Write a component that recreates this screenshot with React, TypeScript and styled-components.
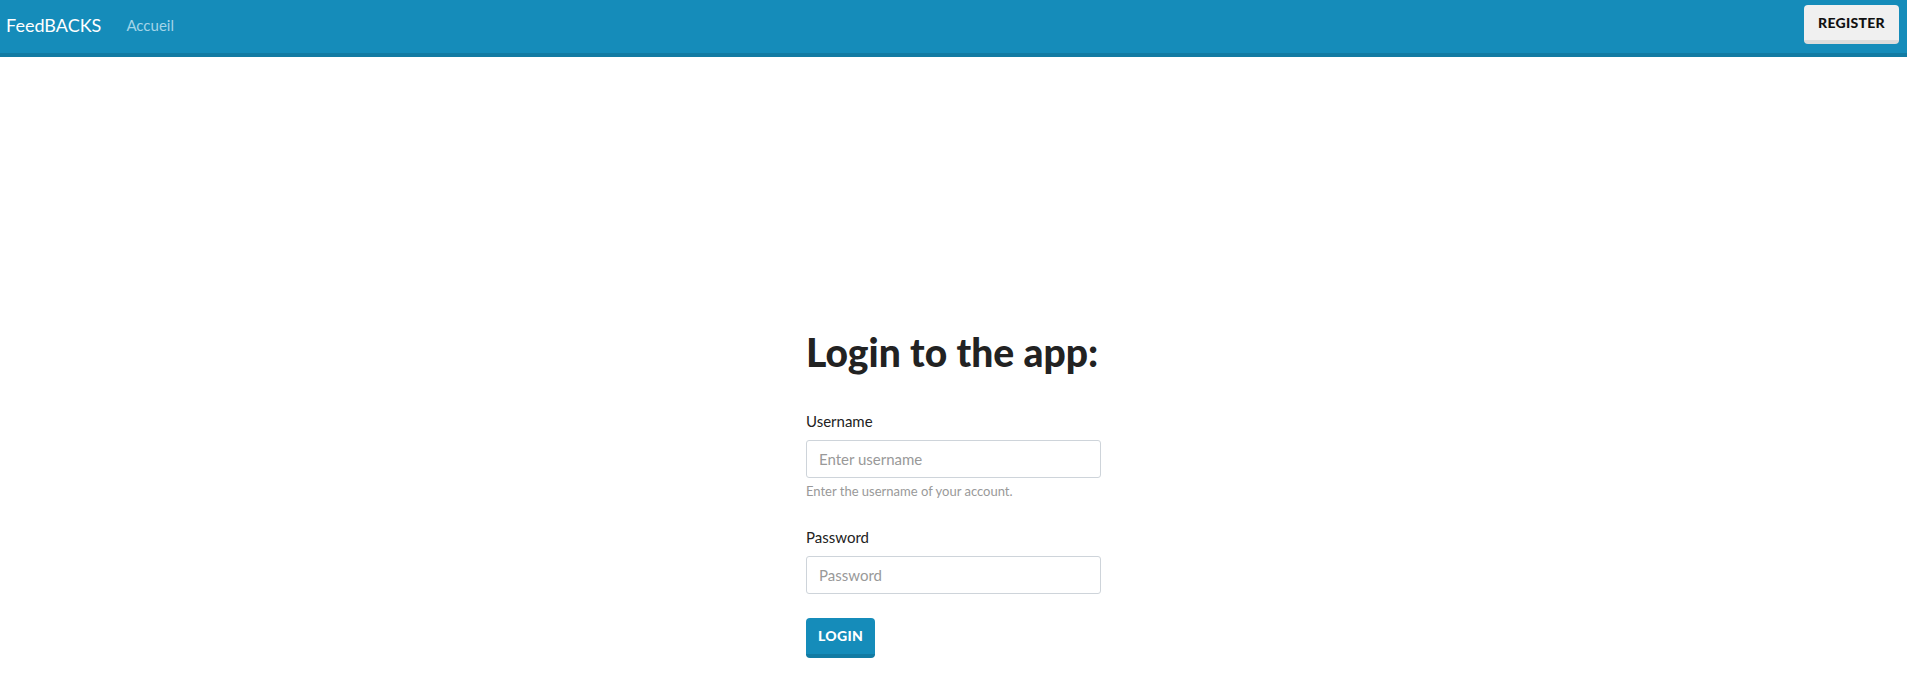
import React, { useState } from 'react';
import styled, { createGlobalStyle } from 'styled-components';

const GlobalStyle = createGlobalStyle`
  html, body {
    margin: 0;
    padding: 0;
    background: #ffffff;
    font-family: Lato, "Noto Sans", sans-serif;
    color: #222222;
  }
  * {
    box-sizing: border-box;
  }
`;

const Navbar = styled.nav`
  display: flex;
  align-items: center;
  height: 57px;
  padding: 0 8px 4px 6px;
  background-color: #158cba;
  border-bottom: 4px solid #127ba3;
`;

const Brand = styled.a`
  font-size: 18px;
  color: #ffffff;
  text-decoration: none;
  margin-right: 25px;
`;

const NavLink = styled.a`
  font-size: 15px;
  color: #a3d4e8;
  text-decoration: none;
`;

const Spacer = styled.div`
  flex: 1;
`;

const Button = styled.button<{ $variant: 'light' | 'primary' }>`
  font-family: Lato, "Noto Sans", sans-serif;
  font-weight: 900;
  font-size: 14px;
  letter-spacing: 0.3px;
  text-transform: uppercase;
  border: none;
  border-radius: 4px;
  cursor: pointer;
  padding: 0 ${p => (p.$variant === 'light' ? '14px' : '12px')};
  height: ${p => (p.$variant === 'light' ? '39px' : '40px')};
  background-color: ${p => (p.$variant === 'light' ? '#f0f0f0' : '#158cba')};
  color: ${p => (p.$variant === 'light' ? '#111111' : '#ffffff')};
  border-bottom: 4px solid ${p => (p.$variant === 'light' ? '#dcdcdc' : '#127ba3')};
`;

const Main = styled.main`
  display: flex;
  justify-content: center;
  padding-top: 272px;
`;

const Form = styled.form`
  width: 295px;
  display: flex;
  flex-direction: column;
`;

const Title = styled.h1`
  margin: 0 0 36px;
  font-size: 39px;
  font-weight: 900;
  line-height: 1.2;
  color: #222222;
`;

const Group = styled.div`
  display: flex;
  flex-direction: column;
  margin-bottom: 24px;
`;

const Label = styled.label`
  font-size: 15px;
  margin-bottom: 10px;
  color: #222222;
`;

const Input = styled.input`
  height: 38px;
  width: 100%;
  padding: 0 12px;
  font-family: Lato, "Noto Sans", sans-serif;
  font-size: 15px;
  color: #222222;
  border: 1px solid #ced4da;
  border-radius: 3px;
  outline: none;
  &::placeholder {
    color: #999999;
  }
`;

const Help = styled.small`
  margin-top: 5px;
  margin-bottom: 5px;
  font-size: 13px;
  color: #999999;
`;

const App: React.FC = () => {
  const [username, setUsername] = useState('');
  const [password, setPassword] = useState('');

  return (
    <>
      <GlobalStyle />
      <Navbar>
        <Brand href="#">FeedBACKS</Brand>
        <NavLink href="#">Accueil</NavLink>
        <Spacer />
        <Button $variant="light" type="button">Register</Button>
      </Navbar>
      <Main>
        <Form onSubmit={e => e.preventDefault()}>
          <Title>Login to the app:</Title>
          <Group>
            <Label htmlFor="username">Username</Label>
            <Input
              id="username"
              placeholder="Enter username"
              value={username}
              onChange={e => setUsername(e.target.value)}
            />
            <Help>Enter the username of your account.</Help>
          </Group>
          <Group>
            <Label htmlFor="password">Password</Label>
            <Input
              id="password"
              type="password"
              placeholder="Password"
              value={password}
              onChange={e => setPassword(e.target.value)}
            />
          </Group>
          <div>
            <Button $variant="primary" type="submit">Login</Button>
          </div>
        </Form>
      </Main>
    </>
  );
};

export default App;
